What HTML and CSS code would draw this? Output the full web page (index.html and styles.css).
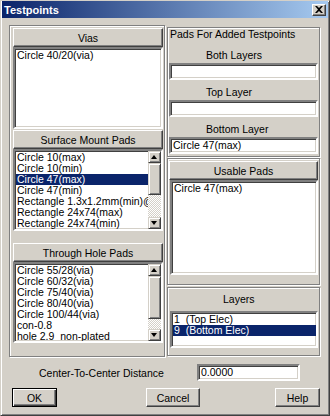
FILE: index.html
```html
<!DOCTYPE html>
<html lang="en">
<head>
    <meta charset="UTF-8">
    <title>Testpoints</title>
    <link rel="stylesheet" href="styles.css">
</head>
<body>
    <div class="window">
        <div class="titlebar">
            <span class="title">Testpoints</span>
            <div class="close">
                <svg width="8" height="7" viewBox="0 0 8 7"><path d="M0 0h2l2 2 2-2h2L5 3.5 8 7H6L4 5 2 7H0l3-3.5z" fill="#000"/></svg>
            </div>
        </div>

        <div class="content">
            <div class="columns">
                <div class="panel left">
                    <div class="header">Vias</div>
                    <div class="listbox">
                        <div class="items">
                            <div class="item">Circle 40/20(via)</div>
                        </div>
                    </div>

                    <div class="header">Surface Mount Pads</div>
                    <div class="listbox">
                        <div class="items">
                            <div class="item">Circle 10(max)</div>
                            <div class="item">Circle 10(min)</div>
                            <div class="item selected">Circle 47(max)</div>
                            <div class="item">Circle 47(min)</div>
                            <div class="item">Rectangle 1.3x1.2mm(min)@90Deg</div>
                            <div class="item">Rectangle 24x74(max)</div>
                            <div class="item">Rectangle 24x74(min)</div>
                        </div>
                        <div class="scrollbar">
                            <div class="arrow up"></div>
                            <div class="thumb smd"></div>
                            <div class="track"></div>
                            <div class="arrow down"></div>
                        </div>
                    </div>

                    <div class="header gap">Through Hole Pads</div>
                    <div class="listbox short">
                        <div class="items">
                            <div class="item">Circle 55/28(via)</div>
                            <div class="item">Circle 60/32(via)</div>
                            <div class="item">Circle 75/40(via)</div>
                            <div class="item">Circle 80/40(via)</div>
                            <div class="item">Circle 100/44(via)</div>
                            <div class="item">con-0.8</div>
                            <div class="item">hole 2.9_non-plated</div>
                        </div>
                        <div class="scrollbar">
                            <div class="arrow up"></div>
                            <div class="thumb thp"></div>
                            <div class="track"></div>
                            <div class="arrow down"></div>
                        </div>
                    </div>
                </div>

                <div class="right">
                    <div class="panel pads">
                        <div class="caption">Pads For Added Testpoints</div>
                        <div class="label">Both Layers</div>
                        <div class="field"></div>
                        <div class="label">Top Layer</div>
                        <div class="field"></div>
                        <div class="label">Bottom Layer</div>
                        <div class="field">Circle 47(max)</div>
                    </div>

                    <div class="panel usable">
                        <div class="header">Usable Pads</div>
                        <div class="listbox tall">
                            <div class="items">
                                <div class="item">Circle 47(max)</div>
                            </div>
                        </div>
                    </div>

                    <div class="panel layers">
                        <div class="label">Layers</div>
                        <div class="listbox small">
                            <div class="items">
                                <div class="item">1  (Top Elec)</div>
                                <div class="item selected">9  (Bottom Elec)</div>
                            </div>
                        </div>
                    </div>
                </div>
            </div>

            <div class="distance">
                <span class="distance-label">Center-To-Center Distance</span>
                <div class="field">0.0000</div>
            </div>

            <div class="buttons">
                <div class="button default">OK</div>
                <div class="button cancel">Cancel</div>
                <div class="button help">Help</div>
            </div>
        </div>
    </div>
</body>
</html>
```

FILE: styles.css
```css
* {
    box-sizing: border-box;
    margin: 0;
    padding: 0;
}

body {
    font-family: "Liberation Sans Narrow", "Liberation Sans", Arial, sans-serif;
    font-size: 10.5px;
    color: #000000;
    background-color: #d4d0c8;
}

.window {
    width: 330px;
    height: 416px;
    background-color: #d4d0c8;
    border: 1px solid;
    border-color: #d4d0c8 #404040 #404040 #d4d0c8;
    box-shadow: inset 1px 1px #ffffff, inset -1px -1px #808080;
    padding: 0 1px;
}

/* Title bar */
.titlebar {
    height: 17px;
    display: flex;
    align-items: center;
    justify-content: space-between;
    padding: 0 2px 0 2px;
    background: linear-gradient(to right, #0a246a, #a6caf0);
}

.title {
    font-family: "Liberation Sans", Arial, sans-serif;
    font-weight: bold;
    font-size: 11px;
    color: #ffffff;
}

.close {
    width: 14px;
    height: 12px;
    display: flex;
    align-items: center;
    justify-content: center;
    background-color: #d4d0c8;
    border: 1px solid;
    border-color: #ffffff #404040 #404040 #ffffff;
    box-shadow: inset -1px -1px #808080;
}

.content {
    padding: 7px 0 0 7px;
}

.columns {
    display: flex;
    gap: 2px;
}

/* Etched frames */
.panel {
    border: 1px solid #808080;
    box-shadow: inset 1px 1px #ffffff, 1px 1px #ffffff;
}

.left {
    width: 156px;
    height: 332px;
    padding: 2px 1px 0 3px;
}

.right {
    width: 153px;
    margin-top: 2px;
    display: flex;
    flex-direction: column;
}

/* Raised header buttons */
.header {
    height: 19px;
    display: flex;
    align-items: center;
    justify-content: center;
    border: 1px solid;
    border-color: #ffffff #404040 #404040 #ffffff;
    box-shadow: inset -1px -1px #808080;
}

.listbox + .header {
    margin-top: 1px;
}

.header.gap {
    margin-top: 12px;
}

/* Sunken list boxes */
.listbox {
    height: 82px;
    display: flex;
    background-color: #ffffff;
    border: 2px solid;
    border-color: #808080 #ffffff #ffffff #808080;
    box-shadow: inset 1px 1px #404040, inset -1px -1px #d4d0c8;
    overflow: hidden;
}

.listbox.short {
    height: 81px;
}

.items {
    flex: 1;
    min-width: 0;
    padding: 1px 0 0 1px;
    overflow: hidden;
}

.item {
    height: 11px;
    line-height: 11px;
    padding-left: 1px;
    white-space: pre;
    overflow: hidden;
}

.item.selected {
    background-color: #0a246a;
    color: #ffffff;
}

.scrollbar {
    width: 13px;
    display: flex;
    flex-direction: column;
}

.arrow {
    height: 12px;
    flex: none;
    position: relative;
    background-color: #d4d0c8;
    border: 1px solid;
    border-color: #d4d0c8 #404040 #404040 #d4d0c8;
    box-shadow: inset 1px 1px #ffffff, inset -1px -1px #808080;
}

.arrow::after {
    content: "";
    position: absolute;
    left: 2px;
    width: 0;
    height: 0;
    border-left: 3.5px solid transparent;
    border-right: 3.5px solid transparent;
}

.arrow.up::after {
    top: 3px;
    border-bottom: 4px solid #000000;
}

.arrow.down::after {
    top: 3px;
    border-top: 4px solid #000000;
}

.thumb {
    flex: none;
    background-color: #d4d0c8;
    border: 1px solid;
    border-color: #d4d0c8 #404040 #404040 #d4d0c8;
    box-shadow: inset 1px 1px #ffffff, inset -1px -1px #808080;
}

.thumb.smd {
    height: 32px;
}

.thumb.thp {
    height: 43px;
}

.track {
    flex: 1;
    background: repeating-conic-gradient(#ffffff 0 25%, #d4d0c8 0 50%) 0 0 / 2px 2px;
}

/* Pads for added testpoints */
.pads {
    height: 130px;
    padding: 0 1px;
}

.caption {
    height: 13px;
    line-height: 13px;
    padding-left: 1px;
}

.label {
    height: 12px;
    line-height: 12px;
    padding-left: 37px;
}

.pads .label {
    margin-top: 8px;
}

.pads .field + .label {
    margin-top: 6px;
}

.field {
    height: 17px;
    margin-top: 2px;
    padding-left: 2px;
    line-height: 13px;
    background-color: #ffffff;
    border: 2px solid;
    border-color: #808080 #ffffff #ffffff #808080;
    box-shadow: inset 1px 1px #404040, inset -1px -1px #d4d0c8;
}

.usable {
    height: 127px;
    margin-top: 1px;
    padding: 2px 1px 0 1px;
}

.listbox.tall {
    height: 95px;
    margin-left: 1px;
}

.layers {
    height: 69px;
    margin-top: 2px;
    padding: 4px 1px 0 2px;
}

.layers .label {
    padding-left: 53px;
    height: 14px;
    line-height: 14px;
}

.listbox.small {
    height: 37px;
    margin-top: 5px;
}

/* Bottom rows */
.distance {
    display: flex;
    align-items: center;
    margin-top: 7px;
    padding-left: 30px;
}

.distance-label {
    width: 158px;
}

.distance .field {
    width: 103px;
    margin-top: 0;
}

.buttons {
    display: flex;
    margin-top: 7px;
    padding-left: 3px;
}

.button {
    width: 45px;
    height: 19px;
    display: flex;
    align-items: center;
    justify-content: center;
    background-color: #d4d0c8;
    border: 1px solid;
    border-color: #ffffff #404040 #404040 #ffffff;
    box-shadow: inset -1px -1px #808080;
}

.button.default {
    border-color: #000000;
    box-shadow: inset 1px 1px #ffffff, inset -1px -1px #404040, inset -2px -2px #808080;
}

.button.cancel {
    width: 54px;
    margin-left: 89px;
}

.button.help {
    margin-left: 75px;
}
```
